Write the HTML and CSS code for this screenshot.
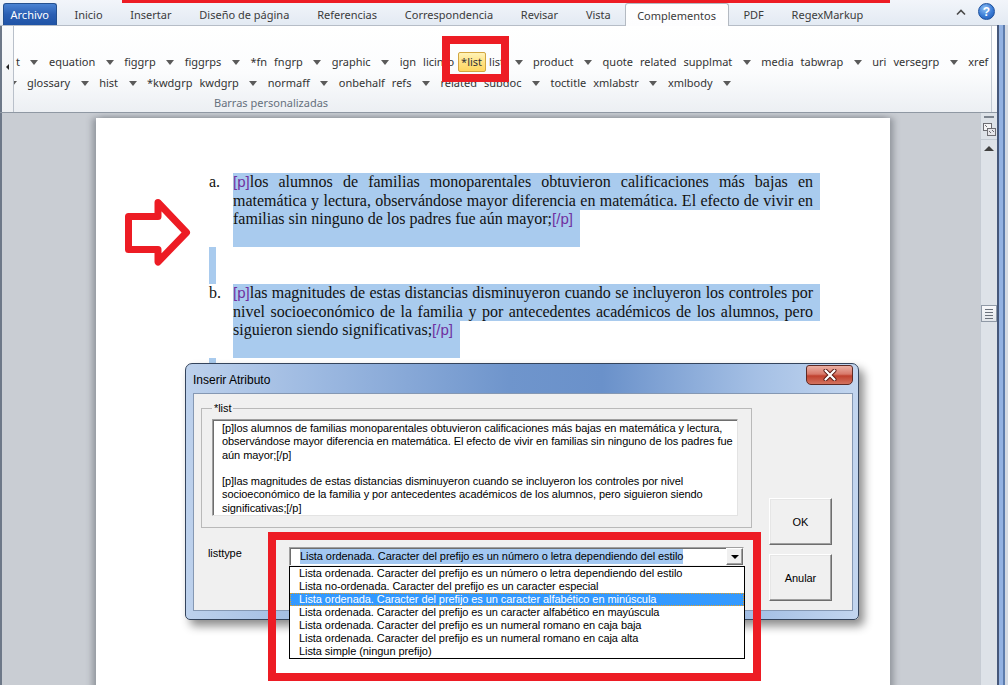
FILE: index.html
```html
<!DOCTYPE html>
<html>
<head>
<meta charset="utf-8">
<title>Inserir Atributo</title>
<link rel="stylesheet" href="styles.css">
</head>
<body>
<div class="tabbar">
  <div class="tab file">Archivo</div>
  <div class="tab">Inicio</div>
  <div class="tab">Insertar</div>
  <div class="tab">Diseño de página</div>
  <div class="tab">Referencias</div>
  <div class="tab">Correspondencia</div>
  <div class="tab">Revisar</div>
  <div class="tab">Vista</div>
  <div class="tab active">Complementos</div>
  <div class="tab">PDF</div>
  <div class="tab">RegexMarkup</div>
  <div class="tabtools">
    <svg class="minim" width="10" height="8" viewBox="0 0 10 8"><path d="M1 6.5 L5 2.5 L9 6.5" fill="none" stroke="#4a4a4a" stroke-width="1.6"/></svg>
    <span class="help">?</span>
  </div>
</div>
<div class="main">
  <div class="mainl">
    <div class="ribbon">
      <div class="rleft"><i class="larr"></i></div>
      <div class="group">
        <div class="row r1">
          <span class="b">t</span><i class="dd"></i>
          <span class="b">equation</span><i class="dd"></i>
          <span class="b">figgrp</span><i class="dd"></i>
          <span class="b">figgrps</span><i class="dd"></i>
          <span class="b">*fn</span><span class="b">fngrp</span><i class="dd"></i>
          <span class="b">graphic</span><i class="dd"></i>
          <span class="b">ign</span><span class="b">licinfo</span><span class="b sel">*list</span><span class="b">list</span><i class="dd"></i>
          <span class="b">product</span><i class="dd"></i>
          <span class="b">quote</span><span class="b">related</span><span class="b">supplmat</span><i class="dd"></i>
          <span class="b">media</span><span class="b">tabwrap</span><i class="dd"></i>
          <span class="b">uri</span><span class="b">versegrp</span><i class="dd"></i>
          <span class="b">xref</span>
        </div>
        <div class="row r2">
          <i class="dd first"></i>
          <span class="b">glossary</span><i class="dd"></i>
          <span class="b">hist</span><i class="dd"></i>
          <span class="b">*kwdgrp</span><span class="b">kwdgrp</span><i class="dd"></i>
          <span class="b">normaff</span><i class="dd"></i>
          <span class="b">onbehalf</span><span class="b">refs</span><i class="dd"></i>
          <span class="b">related</span><span class="b">subdoc</span><i class="dd"></i>
          <span class="b">toctitle</span><span class="b">xmlabstr</span><i class="dd"></i>
          <span class="b">xmlbody</span><i class="dd"></i>
        </div>
        <div class="glabel">Barras personalizadas</div>
      </div>
    </div>
    <div class="workspace">
      <div class="docarea">
        <div class="page">
          <div class="item">
            <div class="num">a.</div>
            <div class="ptext">
              <div class="ln full"><span class="tag">[p]</span>los alumnos de familias monoparentales obtuvieron calificaciones más bajas en</div>
              <div class="ln full">matemática y lectura, observándose mayor diferencia en matemática. El efecto de vivir en</div>
              <div class="ln last">familias sin ninguno de los padres fue aún mayor;<span class="tag">[/p]</span></div>
            </div>
          </div>
          <div class="blank"></div>
          <div class="item">
            <div class="num">b.</div>
            <div class="ptext">
              <div class="ln full"><span class="tag">[p]</span>las magnitudes de estas distancias disminuyeron cuando se incluyeron los controles por</div>
              <div class="ln full">nivel socioeconómico de la familia y por antecedentes académicos de los alumnos, pero</div>
              <div class="ln last">siguieron siendo significativas;<span class="tag">[/p]</span></div>
            </div>
          </div>
          <div class="blank"></div>
        </div>
      </div>
      <div class="vscroll">
        <div class="vs-bar"></div>
        <svg class="vs-ruler" width="13" height="13" viewBox="0 0 13 13">
          <rect x="0.5" y="0.5" width="8" height="7" fill="#f4f4f6" stroke="#6d6d72"/>
          <rect x="4.5" y="5.5" width="8" height="7" fill="#e6e6ea" stroke="#6d6d72"/>
          <path d="M2 2 L4 4 M6 8 L8 10 M9 7 L11 9" stroke="#6d6d72" stroke-width="1"/>
        </svg>
        <div class="vs-sep"></div>
        <div class="vs-up"></div>
        <div class="vs-thumb"><i></i><i></i><i></i><i></i></div>
      </div>
    </div>
  </div>
  <div class="rborder"></div>
</div>

<div class="redline"></div>
<div class="redbox rb1"></div>
<svg class="redarrow" width="80" height="85" viewBox="0 0 80 85">
  <polygon points="8.5,26.5 38,26.5 38,12.5 66.5,42.5 38,72 38,59.5 8.5,59.5" fill="none" stroke="#ed1c24" stroke-width="7" stroke-linejoin="round"/>
</svg>

<div class="dlg">
  <div class="dlg-title">Inserir Atributo</div>
  <div class="close">
    <svg width="14" height="12" viewBox="0 0 14 12"><path d="M2.5 1.5 L11.5 10.5 M11.5 1.5 L2.5 10.5" stroke="#5a1a14" stroke-width="4" stroke-linecap="round"/><path d="M2.5 1.5 L11.5 10.5 M11.5 1.5 L2.5 10.5" stroke="#fff" stroke-width="2.2" stroke-linecap="round"/></svg>
  </div>
  <div class="client">
    <div class="leftcol">
      <fieldset class="fs">
        <legend>*list</legend>
        <div class="ta">[p]los alumnos de familias monoparentales obtuvieron calificaciones más bajas en matemática y lectura,<br>observándose mayor diferencia en matemática. El efecto de vivir en familias sin ninguno de los padres fue<br>aún mayor;[/p]<br><br>[p]las magnitudes de estas distancias disminuyeron cuando se incluyeron los controles por nivel<br>socioeconómico de la familia y por antecedentes académicos de los alumnos, pero siguieron siendo<br>significativas;[/p]</div>
      </fieldset>
      <div class="ltrow">
        <div class="ltlabel">listtype</div>
        <div class="combo">
          <span class="csel">Lista ordenada. Caracter del prefijo es un número o letra dependiendo del estilo</span>
          <div class="cbtn"><i></i></div>
          <div class="list">
            <div class="opt">Lista ordenada. Caracter del prefijo es un número o letra dependiendo del estilo</div>
            <div class="opt">Lista no-ordenada. Caracter del prefijo es un caracter especial</div>
            <div class="opt on">Lista ordenada. Caracter del prefijo es un caracter alfabético en minúscula</div>
            <div class="opt">Lista ordenada. Caracter del prefijo es un caracter alfabético en mayúscula</div>
            <div class="opt">Lista ordenada. Caracter del prefijo es un numeral romano en caja baja</div>
            <div class="opt">Lista ordenada. Caracter del prefijo es un numeral romano en caja alta</div>
            <div class="opt">Lista simple (ningun prefijo)</div>
          </div>
        </div>
      </div>
    </div>
    <div class="rightcol">
      <div class="btn">OK</div>
      <div class="btn">Anular</div>
    </div>
  </div>
</div>
<div class="redbox rb2"></div>
</body>
</html>
```

FILE: styles.css
```css
* { box-sizing: border-box; }
html, body { margin: 0; padding: 0; }
body {
  width: 1008px;
  height: 685px;
  overflow: hidden;
  position: relative;
  background: #e6ecf4;
  font-family: "Noto Sans", "Open Sans", sans-serif;
}

/* ---------- tab bar ---------- */
.tabbar {
  height: 25px;
  display: flex;
  align-items: flex-end;
  padding-left: 3px;
  background: linear-gradient(#f2f5fa, #e3eaf3);
  font-size: 11px;
  color: #3b3b3b;
  position: relative;
  z-index: 2;
}
.tab {
  height: 22px;
  padding: 0 13.9px;
  display: flex;
  align-items: center;
  white-space: nowrap;
}
.tab.file {
  padding: 0 6.5px;
  margin-right: 4px;
  color: #fff;
  background: linear-gradient(#4a82d2, #2b5fb3 50%, #1f53a6);
  border: 1px solid #25508f;
  border-bottom: none;
  border-radius: 3px 3px 0 0;
}
.tab.active {
  height: 23px;
  margin: 0 1px 0 0;
  padding: 0 11.5px;
  background: linear-gradient(#fff, #fdfdfe);
  border: 1px solid #b4bac2;
  border-bottom: none;
  border-radius: 3px 3px 0 0;
  position: relative;
  top: 1px;
}
.tabtools {
  margin-left: auto;
  margin-right: 13px;
  height: 25px;
  display: flex;
  align-items: center;
  gap: 12px;
}
.minim { margin-top: -2px; }
.help {
  width: 17px;
  height: 17px;
  border-radius: 50%;
  background: radial-gradient(circle at 40% 30%, #8fc0f5, #3a7bd5 55%, #1d56b0);
  border: 1px solid #1c4f9c;
  color: #fff;
  font: bold 12px "Liberation Sans", sans-serif;
  display: flex;
  align-items: center;
  justify-content: center;
  margin-top: -2px;
}

/* ---------- main frame ---------- */
.main {
  display: flex;
  height: 660px;
}
.mainl {
  width: 997px;
  display: flex;
  flex-direction: column;
}
.rborder {
  width: 11px;
  background: linear-gradient(to right, #46587a 0 2px, #93b2e2 2px 6px, #5d7cad 6px 8px, #d4dae3 8px);
}

/* ---------- ribbon ---------- */
.ribbon {
  height: 88px;
  display: flex;
  border-top: 1px solid #b6bdc7;
  border-bottom: 1px solid #8f98a3;
  background: linear-gradient(#ffffff, #fbfcfd 55%, #eceff3);
}
.rleft {
  width: 14px;
  border-left: 2px solid #6d7888;
  border-right: 1px solid #b9c0ca;
  position: relative;
  background: linear-gradient(#fafbfc, #eef0f3);
}
.larr {
  position: absolute;
  left: 4px;
  top: 38px;
  width: 0;
  height: 0;
  border-top: 3px solid transparent;
  border-bottom: 3px solid transparent;
  border-right: 3px solid #222;
}
.group {
  width: 978px;
  overflow: hidden;
  border-right: 1px solid #c3cad3;
  padding-top: 25px;
  font-size: 11px;
  color: #333;
}
.row {
  height: 22px;
  display: flex;
  align-items: center;
  white-space: nowrap;
}
.r1 { margin-left: -1.5px; }
.r2 { margin-top: -1px; }
.b {
  padding: 0 3.5px;
  height: 20px;
  line-height: 20px;
  flex: none;
}
.b.sel {
  padding: 0 2.5px;
  border: 1px solid #d2a640;
  border-radius: 2px;
  line-height: 18px;
  background: linear-gradient(#fff3b8, #ffe285 50%, #ffd660);
}
.dd {
  flex: none;
  width: 0;
  height: 0;
  margin: 0 7px;
  border-left: 4px solid transparent;
  border-right: 4px solid transparent;
  border-top: 5px solid #5a5a5a;
}
.dd.first { margin-left: -5.5px; }
.glabel {
  height: 18px;
  line-height: 18px;
  padding-left: 200px;
  color: #66707d;
}

/* ---------- workspace ---------- */
.workspace {
  flex: 1;
  display: flex;
  min-height: 0;
}
.docarea {
  flex: 1;
  overflow: hidden;
  border-left: 2px solid #6d7888;
  padding: 5px 0 0 94px;
  background: #c9cdd3;
}
.page {
  width: 794px;
  height: 700px;
  background: #fff;
  padding: 55px 0 0 113px;
  box-shadow: -4px 0 6px rgba(60, 66, 74, 0.35), 4px 0 6px rgba(60, 66, 74, 0.35);
  font-family: "Liberation Serif", "Times New Roman", serif;
  font-size: 16px;
  color: #111;
}
.item { display: flex; }
.num {
  width: 24px;
  line-height: 18.5px;
  flex: none;
}
.ln {
  height: 18.5px;
  line-height: 18.5px;
  background: #a9cbee;
  white-space: nowrap;
}
.ln.full {
  width: 587px;
  padding-right: 7px;
  word-spacing: -2px;
  text-align: justify;
  text-align-last: justify;
}
.ln.last {
  width: max-content;
  padding-right: 7px;
  height: 37px;
}
.tag {
  font-family: "Liberation Sans", sans-serif;
  color: #7030a0;
  font-size: 15px;
  word-spacing: 0;
}
.blank {
  width: 7px;
  height: 37px;
  background: #a9cbee;
}

/* ---------- vertical scroll bar ---------- */
.vscroll {
  width: 17px;
  display: flex;
  flex-direction: column;
  align-items: center;
  background: #dde2e8;
  border-left: 1px solid #c6ccd4;
}
.vs-bar {
  margin-top: 3px;
  width: 10px;
  height: 2px;
  background: #7c848f;
}
.vs-ruler { margin-top: 5px; flex: none; }
.vs-sep {
  margin-top: 3px;
  width: 100%;
  height: 1px;
  background: #c4cbd3;
}
.vs-up {
  margin-top: 6px;
  width: 0;
  height: 0;
  border-left: 5px solid transparent;
  border-right: 5px solid transparent;
  border-bottom: 5px solid #3f3f3f;
}
.vs-thumb {
  margin-top: 154px;
  width: 16px;
  height: 17px;
  border: 1px solid #8f99a6;
  background: linear-gradient(#f7f8fa, #e2e6eb);
  display: flex;
  flex-direction: column;
  align-items: center;
  justify-content: center;
  gap: 2px;
}
.vs-thumb i {
  width: 8px;
  height: 1px;
  background: #6a717b;
}

/* ---------- annotations ---------- */
.redline {
  position: absolute;
  left: 122px;
  top: 0;
  width: 768px;
  height: 3px;
  background: #ed1c24;
  z-index: 5;
}
.redbox {
  position: absolute;
  border: 8px solid #ed1c24;
  z-index: 10;
}
.rb1 { left: 442px; top: 36px; width: 67px; height: 46px; }
.rb2 { left: 268px; top: 532px; width: 493px; height: 149px; }
.redarrow {
  position: absolute;
  left: 120px;
  top: 190px;
  z-index: 5;
}

/* ---------- dialog ---------- */
.dlg {
  position: absolute;
  left: 185px;
  top: 363px;
  width: 674px;
  height: 257px;
  padding: 29px 5px 8px 7px;
  border: 1px solid #34445c;
  border-radius: 7px 7px 5px 5px;
  background: linear-gradient(to right, #bdd1ec, #9fbbe2 18%, #6f95cc 48%, #6a91ca 62%, #a5c0e5 85%, #c3d6ef);
  box-shadow: 5px 6px 10px rgba(0, 0, 0, 0.45);
  font-family: "Liberation Sans", Arial, sans-serif;
  font-size: 11px;
  letter-spacing: -0.07px;
  color: #000;
  z-index: 8;
}
.dlg-title {
  position: absolute;
  left: 7px;
  top: 9px;
  font-size: 12px;
  letter-spacing: 0;
  line-height: 14px;
}
.close {
  position: absolute;
  left: 620px;
  top: 1px;
  width: 47px;
  height: 20px;
  border: 1px solid #5e2a24;
  border-radius: 3px 3px 5px 5px;
  background: linear-gradient(#ecb0a4, #d8796a 45%, #c0412e 55%, #d3735f);
  display: flex;
  align-items: center;
  justify-content: center;
}
.client {
  height: 100%;
  display: flex;
  padding: 8px 0 0 7px;
  background: #f0f0f0;
  border: 1px solid #8598b3;
}
.leftcol { width: 551px; flex: none; }
.fs {
  margin: 0;
  padding: 0 0 11px 10px;
  width: 551px;
  border: 1px solid #b9b9b9;
  min-width: 0;
}
.fs legend {
  margin-left: 0;
  padding: 0 2px;
  line-height: 13px;
}
.ta {
  margin-top: 4px;
  width: 526px;
  height: 97px;
  padding: 2px 0 0 9px;
  background: #fff;
  border: 1px solid;
  border-color: #a0a0a0 #e3e3e3 #e3e3e3 #a0a0a0;
  box-shadow: inset 1px 1px 0 #6e6e6e;
  line-height: 13.3px;
  white-space: nowrap;
  overflow: hidden;
}
.ltrow {
  display: flex;
  margin-top: 19px;
}
.ltlabel {
  width: 88px;
  padding-left: 7px;
  line-height: 13px;
}
.combo {
  position: relative;
  width: 455px;
  height: 19px;
  padding-left: 10px;
  display: flex;
  align-items: center;
  background: #fff;
  border: 1px solid;
  border-color: #a0a0a0 #f4f4f4 #f4f4f4 #a0a0a0;
  box-shadow: inset 1px 1px 0 #6e6e6e;
}
.csel {
  background: #a3c8f2;
  line-height: 15px;
  white-space: nowrap;
}
.cbtn {
  margin-left: auto;
  width: 17px;
  height: 17px;
  background: #f0f0f0;
  border: 1px solid;
  border-color: #fff #6e6e6e #6e6e6e #fff;
  box-shadow: inset -1px -1px 0 #a0a0a0;
  display: flex;
  align-items: center;
  justify-content: center;
}
.cbtn i {
  width: 0;
  height: 0;
  border-left: 4px solid transparent;
  border-right: 4px solid transparent;
  border-top: 4px solid #000;
}
.list {
  position: absolute;
  left: -1px;
  top: 18px;
  width: 456px;
  height: 93px;
  border: 1px solid #000;
  background: #fff;
  z-index: 3;
}
.opt {
  height: 13px;
  line-height: 13px;
  padding-left: 9px;
  white-space: nowrap;
}
.opt.on {
  background: #3399ff;
  color: #fff;
  outline: 1px dotted #e8a020;
  outline-offset: -1px;
}
.rightcol {
  margin-left: 17px;
  padding-top: 96px;
  display: flex;
  flex-direction: column;
  gap: 9px;
}
.btn {
  width: 63px;
  height: 47px;
  display: flex;
  align-items: center;
  justify-content: center;
  background: #f0f0f0;
  border: 1px solid;
  border-color: #fff #6e6e6e #6e6e6e #fff;
  box-shadow: inset -1px -1px 0 #a0a0a0, inset 1px 1px 0 #e6e6e6;
}
```
